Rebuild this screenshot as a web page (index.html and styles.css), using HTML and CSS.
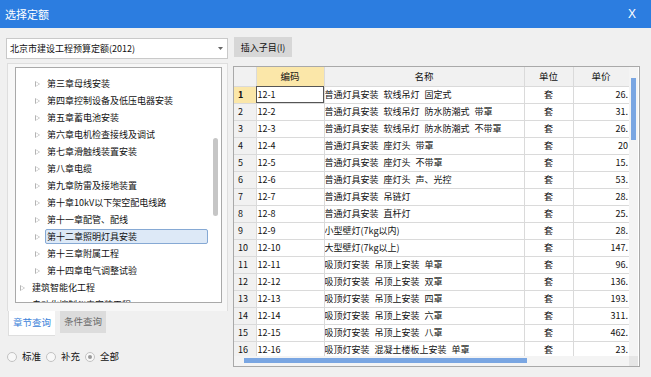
FILE: index.html
```html
<!DOCTYPE html>
<html lang="zh-CN">
<head>
    <meta charset="UTF-8">
    <title>选择定额</title>
    <link rel="stylesheet" href="styles.css">
</head>
<body>
    <div class="window">
        <div class="titlebar">
            <span class="title">选择定额</span>
            <span class="close">X</span>
        </div>
        <div class="main">
            <div class="left">
                <div class="combo">
                    <span>北京市建设工程预算定额(2012)</span>
                    <svg class="combo-arrow" width="5" height="3" viewBox="0 0 5 3"><polygon points="0,0 5,0 2.5,3" fill="#666"/></svg>
                </div>
                <div class="tabpanel">
                    <div class="tree">
                        <ul class="tree-list">
                            <li class="lv2"><i class="arrow"></i><span class="label">第三章母线安装</span></li>
                            <li class="lv2"><i class="arrow"></i><span class="label">第四章控制设备及低压电器安装</span></li>
                            <li class="lv2"><i class="arrow"></i><span class="label">第五章蓄电池安装</span></li>
                            <li class="lv2"><i class="arrow"></i><span class="label">第六章电机检查接线及调试</span></li>
                            <li class="lv2"><i class="arrow"></i><span class="label">第七章滑触线装置安装</span></li>
                            <li class="lv2"><i class="arrow"></i><span class="label">第八章电缆</span></li>
                            <li class="lv2"><i class="arrow"></i><span class="label">第九章防雷及接地装置</span></li>
                            <li class="lv2"><i class="arrow"></i><span class="label">第十章10kV以下架空配电线路</span></li>
                            <li class="lv2"><i class="arrow"></i><span class="label">第十一章配管、配线</span></li>
                            <li class="lv2 selected"><i class="arrow"></i><span class="label">第十二章照明灯具安装</span></li>
                            <li class="lv2"><i class="arrow"></i><span class="label">第十三章附属工程</span></li>
                            <li class="lv2"><i class="arrow"></i><span class="label">第十四章电气调整试验</span></li>
                            <li class="lv1"><i class="arrow"></i><span class="label">建筑智能化工程</span></li>
                            <li class="lv1"><i class="arrow"></i><span class="label">自动化控制仪表安装工程</span></li>
                        </ul>
                        <div class="tree-scroll"><div class="tree-thumb"></div></div>
                    </div>
                </div>
                <div class="tabs">
                    <span class="tab active">章节查询</span>
                    <span class="tab">条件查询</span>
                </div>
                <div class="radios">
                    <label class="radio"><i class="dot"></i>标准</label>
                    <label class="radio"><i class="dot"></i>补充</label>
                    <label class="radio checked"><i class="dot"></i>全部</label>
                </div>
            </div>
            <div class="right">
                <button class="btn">插入子目(I)</button>
                <div class="grid">
                    <div class="grid-body">
                        <div class="grid-view">
                            <table class="table">
                                <colgroup>
                                    <col class="c-num"><col class="c-code"><col class="c-name"><col class="c-unit"><col class="c-price">
                                </colgroup>
                                <thead>
                                    <tr><th></th><th class="hl">编码</th><th>名称</th><th>单位</th><th>单价</th></tr>
                                </thead>
                                <tbody>
                                    <tr class="current"><td class="num">1</td><td class="code sel">12-1</td><td class="name">普通灯具安装 软线吊灯 固定式</td><td class="unit">套</td><td class="price">26.</td></tr>
                                    <tr><td class="num">2</td><td class="code">12-2</td><td class="name">普通灯具安装 软线吊灯 防水防潮式 带罩</td><td class="unit">套</td><td class="price">31.</td></tr>
                                    <tr><td class="num">3</td><td class="code">12-3</td><td class="name">普通灯具安装 软线吊灯 防水防潮式 不带罩</td><td class="unit">套</td><td class="price">26.</td></tr>
                                    <tr><td class="num">4</td><td class="code">12-4</td><td class="name">普通灯具安装 座灯头 带罩</td><td class="unit">套</td><td class="price">20</td></tr>
                                    <tr><td class="num">5</td><td class="code">12-5</td><td class="name">普通灯具安装 座灯头 不带罩</td><td class="unit">套</td><td class="price">15.</td></tr>
                                    <tr><td class="num">6</td><td class="code">12-6</td><td class="name">普通灯具安装 座灯头 声、光控</td><td class="unit">套</td><td class="price">53.</td></tr>
                                    <tr><td class="num">7</td><td class="code">12-7</td><td class="name">普通灯具安装 吊链灯</td><td class="unit">套</td><td class="price">28.</td></tr>
                                    <tr><td class="num">8</td><td class="code">12-8</td><td class="name">普通灯具安装 直杆灯</td><td class="unit">套</td><td class="price">25.</td></tr>
                                    <tr><td class="num">9</td><td class="code">12-9</td><td class="name">小型壁灯(7kg以内)</td><td class="unit">套</td><td class="price">28.</td></tr>
                                    <tr><td class="num">10</td><td class="code">12-10</td><td class="name">大型壁灯(7kg以上)</td><td class="unit">套</td><td class="price">147.</td></tr>
                                    <tr><td class="num">11</td><td class="code">12-11</td><td class="name">吸顶灯安装 吊顶上安装 单罩</td><td class="unit">套</td><td class="price">96.</td></tr>
                                    <tr><td class="num">12</td><td class="code">12-12</td><td class="name">吸顶灯安装 吊顶上安装 双罩</td><td class="unit">套</td><td class="price">136.</td></tr>
                                    <tr><td class="num">13</td><td class="code">12-13</td><td class="name">吸顶灯安装 吊顶上安装 四罩</td><td class="unit">套</td><td class="price">193.</td></tr>
                                    <tr><td class="num">14</td><td class="code">12-14</td><td class="name">吸顶灯安装 吊顶上安装 六罩</td><td class="unit">套</td><td class="price">311.</td></tr>
                                    <tr><td class="num">15</td><td class="code">12-15</td><td class="name">吸顶灯安装 吊顶上安装 八罩</td><td class="unit">套</td><td class="price">462.</td></tr>
                                    <tr><td class="num">16</td><td class="code">12-16</td><td class="name">吸顶灯安装 混凝土楼板上安装 单罩</td><td class="unit">套</td><td class="price">23.</td></tr>
                                </tbody>
                            </table>
                        </div>
                        <div class="vscroll"><div class="vthumb"></div></div>
                    </div>
                    <div class="hscroll">
                        <div class="htrack"><div class="hthumb"></div></div>
                        <div class="corner"></div>
                    </div>
                </div>
            </div>
        </div>
    </div>
</body>
</html>
```

FILE: styles.css
```css
:root {
    --title-blue: #2c7de0;
    --bg: #f0f0f0;
    --border: #a9a9a9;
    --line: #dadada;
    --text: #111;
    --thumb-blue: #7aa6e2;
    --yellow: #fbe7a9;
}

* {
    box-sizing: border-box;
    margin: 0;
    padding: 0;
}

body {
    background: var(--bg);
    color: var(--text);
    font-family: "Noto Sans CJK SC", "Liberation Sans", sans-serif;
    font-size: 9px;
    line-height: 1;
}

.window {
    width: 651px;
    height: 377px;
    overflow: hidden;
}

/* title bar */
.titlebar {
    height: 28px;
    background: var(--title-blue);
    color: #fff;
    display: flex;
    align-items: center;
    justify-content: space-between;
    padding: 0 15px 0 5px;
}

.title { font-size: 11px; }
.close { font-size: 12px; font-family: "Liberation Sans", sans-serif; }

.main {
    display: flex;
    gap: 5px;
    padding: 9px 11px 0 6px;
}

/* left side */
.left {
    width: 222px;
    display: flex;
    flex-direction: column;
}

.combo {
    height: 21px;
    margin-top: 1px;
    background: #fff;
    border: 1px solid #c9c9c9;
    display: flex;
    align-items: center;
    justify-content: space-between;
    padding: 0 4px 0 3px;
}

.tabpanel {
    margin-top: 4px;
    margin-left: 1px;
    height: 248px;
    border: 1px solid #dedede;
    border-bottom: none;
    background: #f7f7f7;
    padding: 3px 5px 8px 7px;
}

.tree {
    height: 100%;
    background: #fff;
    border: 1px solid var(--border);
    display: flex;
    overflow: hidden;
}

.tree-list {
    list-style: none;
    flex: 1;
    padding-top: 7px;
}

.tree-list li {
    height: 17px;
    display: flex;
    align-items: center;
    white-space: nowrap;
}

.tree-list .lv2 { padding-left: 19px; }
.tree-list .lv1 { padding-left: 4px; }

.arrow {
    width: 0;
    height: 0;
    border-top: 3.5px solid transparent;
    border-bottom: 3.5px solid transparent;
    border-left: 5px solid #b4b4b4;
    margin-right: 7px;
    position: relative;
}

.arrow::after {
    content: "";
    position: absolute;
    left: -4px;
    top: -2px;
    border-top: 2px solid transparent;
    border-bottom: 2px solid transparent;
    border-left: 3px solid #fff;
}

.label {
    flex: 1;
    height: 15px;
    line-height: 13px;
    margin-left: -2px;
    margin-right: 4px;
    padding-left: 1px;
    border: 1px solid transparent;
}

.selected .label {
    background: #dde9f7;
    border-color: #86a9d4;
    border-radius: 2px;
}

.tree-scroll {
    width: 9px;
    padding: 70px 0 0 1px;
}

.tree-thumb {
    width: 5px;
    height: 78px;
    background: #c6c6c6;
    border-radius: 3px;
}

.tabs {
    display: flex;
    gap: 5px;
    margin-left: 2px;
    height: 25px;
    align-items: flex-start;
}

.tab {
    height: 22px;
    padding: 0 4px;
    display: flex;
    align-items: center;
    background: #dcdcdc;
    color: #6a6a6a;
    font-size: 9.5px;
}

.tab.active {
    height: 25px;
    background: #fff;
    color: #3b7fd9;
    border-left: 1px solid #dedede;
    border-bottom: 1px solid #dedede;
}

.radios {
    display: flex;
    align-items: center;
    height: 15px;
    margin-top: 13px;
    margin-left: 1px;
    gap: 5px;
}

.radio {
    display: flex;
    align-items: center;
    gap: 5px;
    font-size: 9.5px;
}

.dot {
    width: 10px;
    height: 10px;
    border-radius: 50%;
    border: 1px solid #c2c2c2;
    background: #f8f8f8;
    display: flex;
    align-items: center;
    justify-content: center;
}

.checked .dot::after {
    content: "";
    width: 4px;
    height: 4px;
    border-radius: 50%;
    background: #9a9a9a;
}

/* right side */
.right {
    flex: 1;
    display: flex;
    flex-direction: column;
}

.btn {
    align-self: flex-start;
    width: 58px;
    height: 20px;
    margin-left: 1px;
    border: none;
    background: #d7d7d7;
    color: var(--text);
    font-family: inherit;
    font-size: 9px;
}

.grid {
    margin-top: 9px;
    height: 301px;
    border: 1px solid var(--border);
    background: #fff;
    display: flex;
    flex-direction: column;
}

.grid-body {
    flex: 1;
    display: flex;
    overflow: hidden;
}

.grid-view {
    width: 395px;
    overflow: hidden;
}

.table {
    width: 395px;
    table-layout: fixed;
    border-collapse: collapse;
}

.c-num { width: 22px; }
.c-code { width: 68px; }
.c-name { width: 200px; }
.c-unit { width: 49px; }
.c-price { width: 56px; }

.table th {
    height: 19px;
    font-weight: normal;
    background: #f1f1f1;
    border-right: 1px solid var(--line);
    border-bottom: 1px solid var(--line);
    font-size: 9.5px;
}

.table th.hl { background: var(--yellow); }

.table td {
    height: 17px;
    padding: 0 1px;
    border-right: 1px solid var(--line);
    border-bottom: 1px solid var(--line);
    white-space: nowrap;
    overflow: hidden;
}

.table td.num {
    background: #f1f1f1;
    padding-left: 4px;
}

.current td.num {
    background: var(--yellow);
    font-weight: bold;
}

.table td.name { word-spacing: 3px; padding-left: 0; }
.table td.sel { outline: 1px solid #555; outline-offset: -1px; }

.table td.unit { text-align: center; }

.table td.price {
    text-align: right;
    padding-right: 1px;
    border-right: none;
}

.vscroll {
    width: 9px;
    background: #f4f4f4;
    padding: 11px 0 0 2px;
}

.vthumb {
    width: 5px;
    height: 62px;
    background: var(--thumb-blue);
}

.hscroll {
    height: 10px;
    display: flex;
}

.htrack {
    width: 395px;
    background: #f4f4f4;
    padding: 2px 0 0 10px;
}

.hthumb {
    width: 283px;
    height: 5px;
    background: var(--thumb-blue);
}

.corner {
    width: 9px;
    background: #e6e6e6;
}
```
